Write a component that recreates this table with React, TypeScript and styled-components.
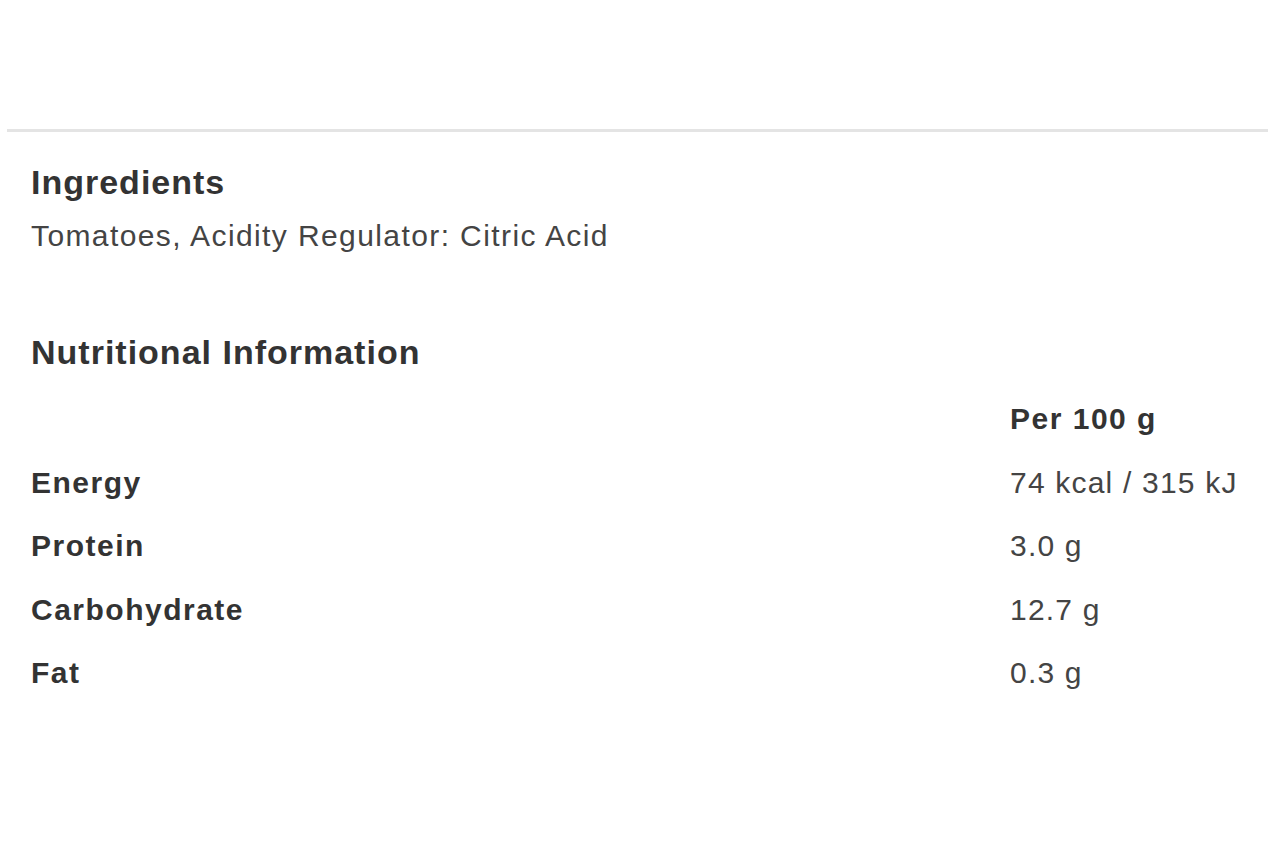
import React from "react";
import styled, { createGlobalStyle } from "styled-components";

const GlobalStyle = createGlobalStyle`
  html, body {
    margin: 0;
    padding: 0;
    background: #ffffff;
  }
  body {
    font-family: "Liberation Sans", Arial, Helvetica, sans-serif;
    color: #333333;
  }
`;

const Page = styled.div`
  padding: 129px 12px 0 7px;
`;

const Divider = styled.hr`
  margin: 0;
  border: 0;
  border-top: 3px solid #e4e4e4;
`;

const Content = styled.div`
  padding: 30px 0 0 24px;
  display: flex;
  flex-direction: column;
`;

const Heading = styled.h2<{ $gap?: number }>`
  margin: ${(p) => p.$gap ?? 0}px 0 0 0;
  font-size: 34px;
  line-height: 40px;
  font-weight: 700;
  letter-spacing: 1px;
  color: #333333;
`;

const Text = styled.p`
  margin: 15.6px 0 0 0;
  font-size: 30px;
  line-height: 36px;
  letter-spacing: 1.4px;
  color: #444444;
`;

const Table = styled.div`
  margin-top: 15.6px;
  display: grid;
  grid-template-columns: 1fr 258px;
`;

const Cell = styled.div<{ $bold?: boolean }>`
  padding: 14px 0 13.5px 0;
  font-size: 30px;
  line-height: 36px;
  letter-spacing: ${(p) => (p.$bold ? 1.5 : 1.2)}px;
  font-weight: ${(p) => (p.$bold ? 700 : 400)};
  color: ${(p) => (p.$bold ? "#333333" : "#444444")};
  white-space: nowrap;
`;

const rows: [string, string][] = [
  ["Energy", "74 kcal / 315 kJ"],
  ["Protein", "3.0 g"],
  ["Carbohydrate", "12.7 g"],
  ["Fat", "0.3 g"],
];

export default function App() {
  return (
    <>
      <GlobalStyle />
      <Page>
        <Divider />
        <Content>
          <Heading>Ingredients</Heading>
          <Text>Tomatoes, Acidity Regulator: Citric Acid</Text>
          <Heading $gap={78}>Nutritional Information</Heading>
          <Table>
            <Cell />
            <Cell $bold>Per 100 g</Cell>
            {rows.map(([label, value]) => (
              <React.Fragment key={label}>
                <Cell $bold>{label}</Cell>
                <Cell>{value}</Cell>
              </React.Fragment>
            ))}
          </Table>
        </Content>
      </Page>
    </>
  );
}
